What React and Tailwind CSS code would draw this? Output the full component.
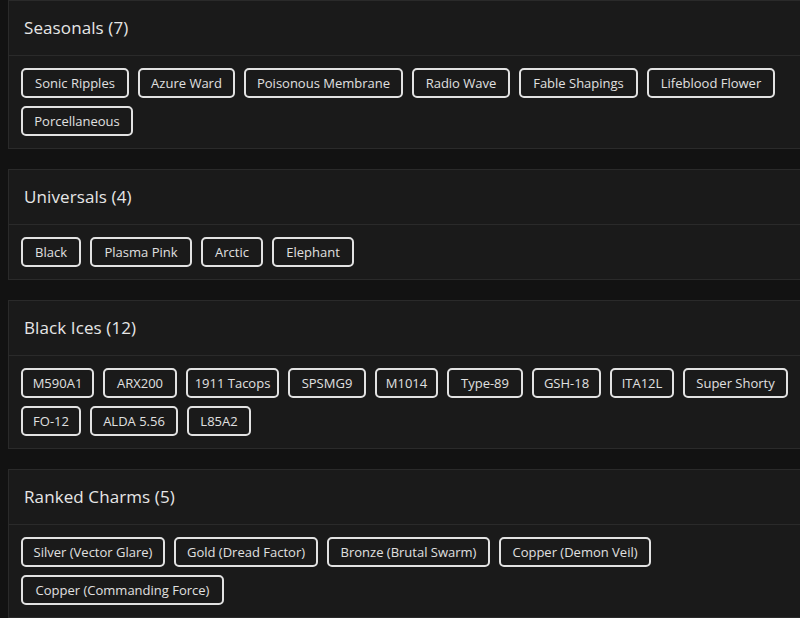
import React from "react";

const sections = [
  {
    title: "Seasonals (7)",
    items: [
      ["Sonic Ripples", "w-[108px]"],
      ["Azure Ward", "w-[97px]"],
      ["Poisonous Membrane", "w-[159px]"],
      ["Radio Wave", "w-[98px]"],
      ["Fable Shapings", "w-[119px]"],
      ["Lifeblood Flower", "w-[128px]"],
      ["Porcellaneous", "w-[112px]"],
    ],
  },
  {
    title: "Universals (4)",
    items: [
      ["Black", "w-[60px]"],
      ["Plasma Pink", "w-[102px]"],
      ["Arctic", "w-[62px]"],
      ["Elephant", "w-[82px]"],
    ],
  },
  {
    title: "Black Ices (12)",
    items: [
      ["M590A1", "w-[73px]"],
      ["ARX200", "w-[74px]"],
      ["1911 Tacops", "w-[93px]"],
      ["SPSMG9", "w-[78px]"],
      ["M1014", "w-[63px]"],
      ["Type-89", "w-[76px]"],
      ["GSH-18", "w-[69px]"],
      ["ITA12L", "w-[64px]"],
      ["Super Shorty", "w-[105px]"],
      ["FO-12", "w-[60px]"],
      ["ALDA 5.56", "w-[88px]"],
      ["L85A2", "w-[64px]"],
    ],
  },
  {
    title: "Ranked Charms (5)",
    items: [
      ["Silver (Vector Glare)", "w-[144px]"],
      ["Gold (Dread Factor)", "w-[144px]"],
      ["Bronze (Brutal Swarm)", "w-[163px]"],
      ["Copper (Demon Veil)", "w-[152px]"],
      ["Copper (Commanding Force)", "w-[203px]"],
    ],
  },
];

export default function App() {
  return (
    <div
      className="w-[800px] h-[618px] overflow-hidden bg-[#121212] pl-2 flex flex-col gap-5"
      style={{ fontFamily: '"Open Sans", "Liberation Sans", sans-serif' }}
    >
      {sections.map((s) => (
        <div key={s.title} className="w-[820px] shrink-0 bg-[#1a1a1a] border border-[#2a2a2a]">
          <div className="h-[55px] flex items-center px-[15px] border-b border-[#2a2a2a]">
            <span className="text-[17px] font-medium text-[#e6e6e6] tracking-[0.1px]">{s.title}</span>
          </div>
          <div className="p-3 flex flex-wrap gap-x-[9px] gap-y-2">
            {s.items.map(([label, w]) => (
              <div
                key={label}
                className={`${w} h-[30px] flex items-center justify-center whitespace-nowrap border-2 border-[#e2e2e2] rounded-[5px] text-[13px] text-[#e0e0e0] leading-none`}
              >
                {label}
              </div>
            ))}
          </div>
        </div>
      ))}
    </div>
  );
}
